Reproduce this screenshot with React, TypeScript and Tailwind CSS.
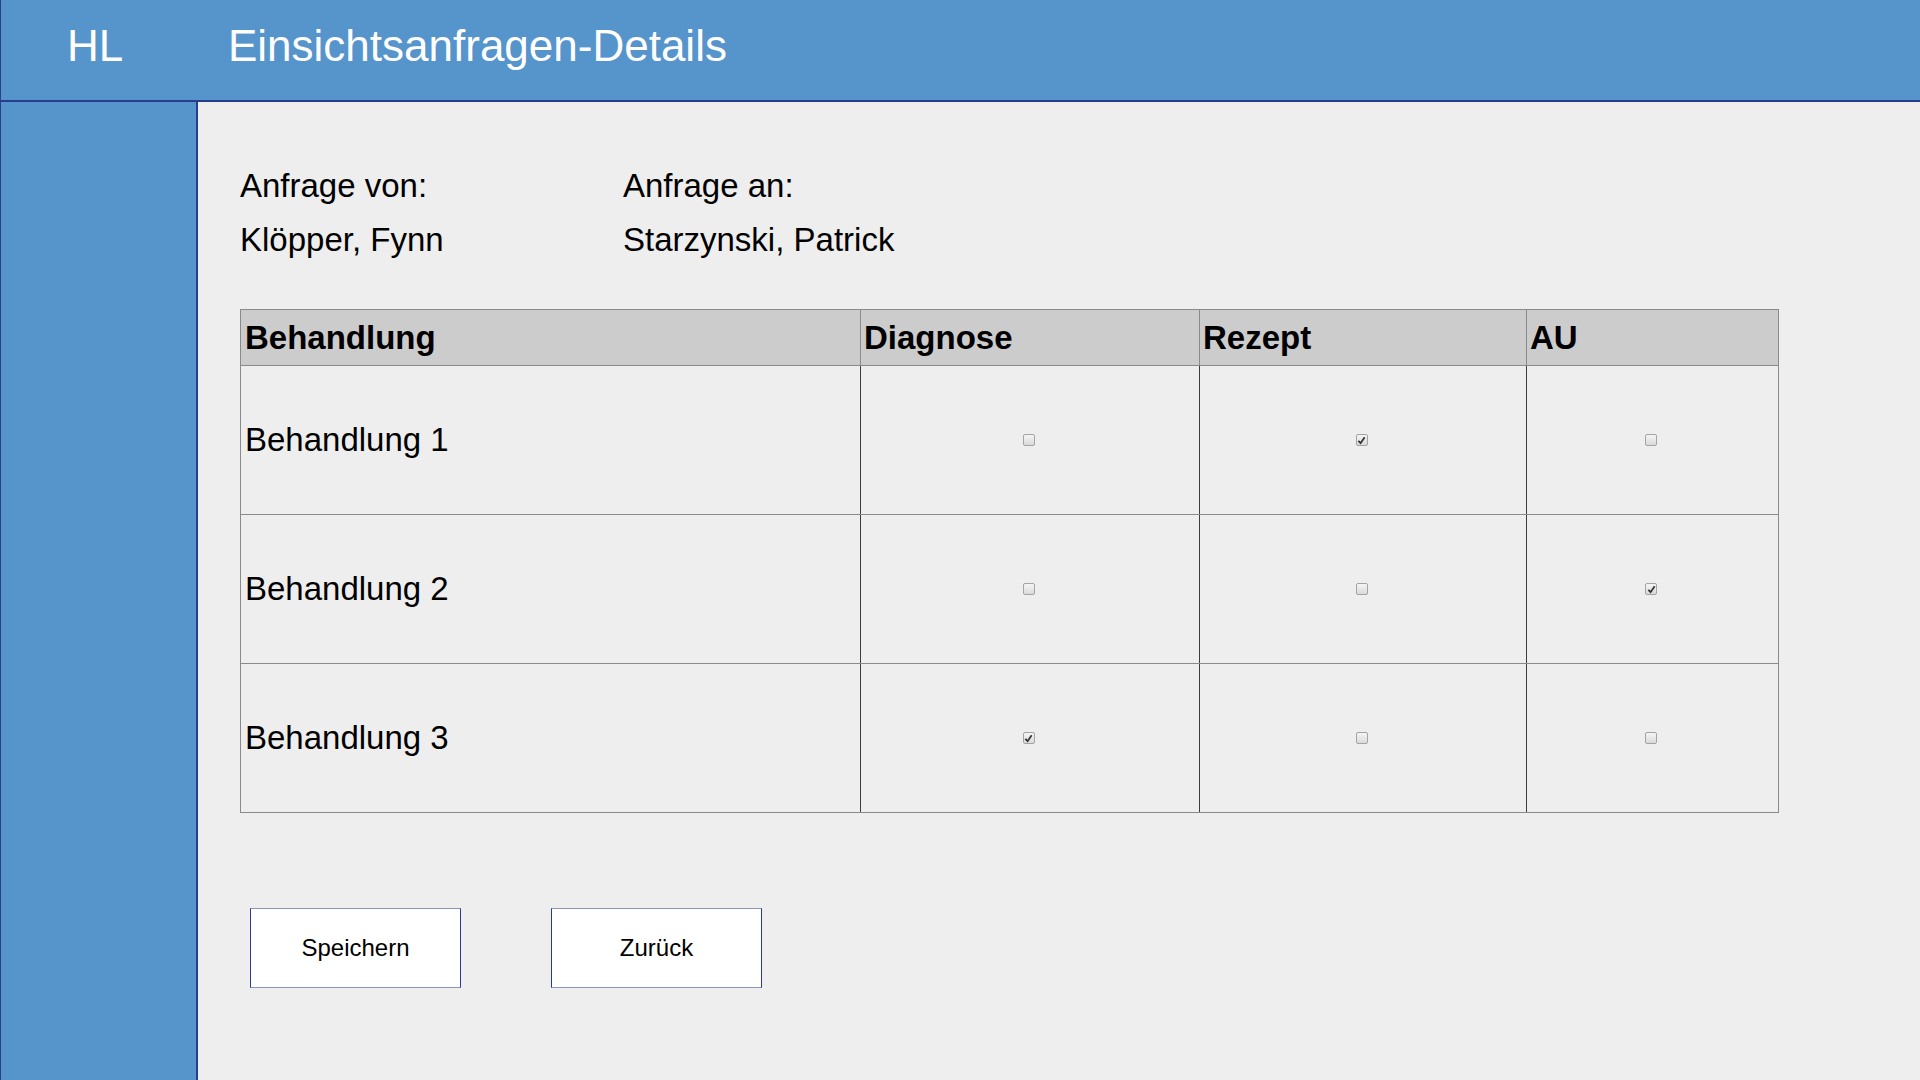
import React from 'react';

const rows = [
  { name: 'Behandlung 1', diagnose: false, rezept: true, au: false },
  { name: 'Behandlung 2', diagnose: false, rezept: false, au: true },
  { name: 'Behandlung 3', diagnose: true, rezept: false, au: false },
];

function Check({ checked }: { checked: boolean }) {
  return (
    <div className="flex items-center justify-center pr-[3px]">
      <span className="flex w-[12px] h-[12px] items-center justify-center rounded-[2px] border border-[#a3a3a3] bg-gradient-to-b from-[#f5f5f5] to-[#dadada]">
        {checked && (
          <svg width="9" height="9" viewBox="0 0 10 10">
            <path d="M1.5 5.5 L4 8 L8.5 1.5" fill="none" stroke="#333" strokeWidth="2" />
          </svg>
        )}
      </span>
    </div>
  );
}

export default function App() {
  const font = { fontFamily: '"Liberation Sans", Arial, sans-serif' };
  return (
    <div className="h-screen w-full flex flex-col overflow-hidden border-l border-[#2b3f8f]" style={font}>
      {/* Header */}
      <header className="h-[102px] shrink-0 flex items-center pb-[8px] bg-[#5694cc] border-b-2 border-[#2a3c8e] text-white text-[44px] leading-none">
        <span className="pl-[66px] w-[227px]">HL</span>
        <span>Einsichtsanfragen-Details</span>
      </header>

      <div className="flex flex-1">
        {/* Sidebar */}
        <aside className="w-[197px] shrink-0 bg-[#5694cc] border-r-2 border-[#2a3c8e]"></aside>

        {/* Content */}
        <main className="flex-1 bg-[#eeeeee] pl-[41px] pt-[62px] text-black">
          <div className="grid grid-cols-[383px_1fr] gap-y-[10px] text-[33px] leading-[44px] pl-[1px]">
            <div>Anfrage von:</div>
            <div>Anfrage an:</div>
            <div>Klöpper, Fynn</div>
            <div>Starzynski, Patrick</div>
          </div>

          <table className="mt-[47px] ml-[1px] w-[1538px] border-collapse text-[33px] table-fixed">
            <colgroup>
              <col className="w-[620px]" />
              <col className="w-[339px]" />
              <col className="w-[327px]" />
              <col className="w-[252px]" />
            </colgroup>
            <thead>
              <tr className="h-[56px] bg-[#cccccc] font-bold">
                <th className="text-left pl-[4px] border border-[#8a8a8a]">Behandlung</th>
                <th className="text-left pl-[3px] border border-[#8a8a8a]">Diagnose</th>
                <th className="text-left pl-[3px] border border-[#8a8a8a]">Rezept</th>
                <th className="text-left pl-[3px] border border-[#8a8a8a]">AU</th>
              </tr>
            </thead>
            <tbody>
              {rows.map((r) => (
                <tr key={r.name} className="h-[149px]">
                  <td className="pl-[4px] border-y border-l border-[#8a8a8a]">{r.name}</td>
                  <td className="border-y border-l border-y-[#8a8a8a] border-l-[#3c3c3c]"><Check checked={r.diagnose} /></td>
                  <td className="border-y border-l border-y-[#8a8a8a] border-l-[#3c3c3c]"><Check checked={r.rezept} /></td>
                  <td className="border border-y-[#8a8a8a] border-l-[#3c3c3c] border-r-[#8a8a8a]"><Check checked={r.au} /></td>
                </tr>
              ))}
            </tbody>
          </table>

          <div className="flex gap-[90px] ml-[11px] mt-[95px]">
            <button className="w-[211px] h-[80px] bg-white text-[24px] border border-x-[#2b3b94] border-y-[#8a95c2]">Speichern</button>
            <button className="w-[211px] h-[80px] bg-white text-[24px] border border-x-[#2b3b94] border-y-[#8a95c2]">Zurück</button>
          </div>
        </main>
      </div>
    </div>
  );
}
